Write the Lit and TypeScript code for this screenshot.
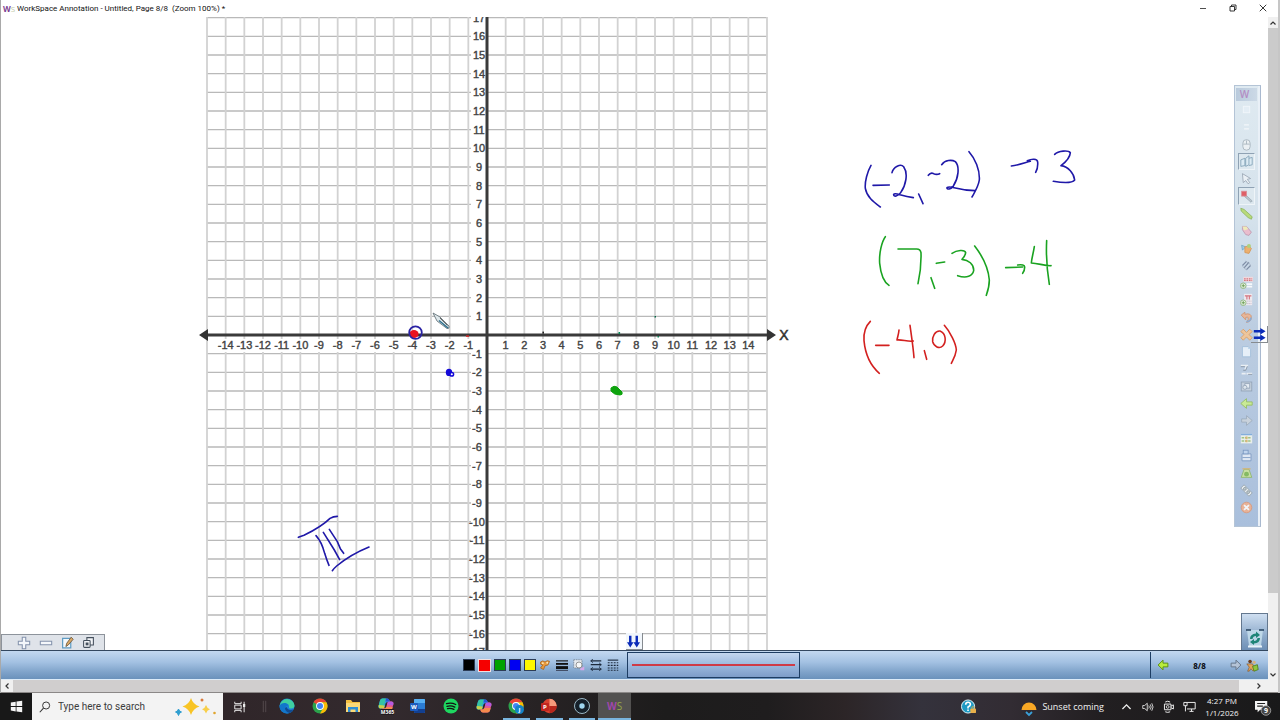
import { LitElement, html, svg, css, TemplateResult } from "lit";
import { customElement } from "lit/decorators.js";
import { classMap } from "lit/directives/class-map.js";

type Glyph = TemplateResult;

const icon = (body: Glyph, size = 16) =>
  html`<svg class="icon" width=${size} height=${size} viewBox="0 0 16 16" aria-hidden="true">${body}</svg>`;

/* ---------- coordinate plane ---------- */

const STEP = 56 / 3;
const range = (from: number, to: number) =>
  Array.from({ length: to - from + 1 }, (_, i) => from + i);

@customElement("coordinate-plane")
export class CoordinatePlane extends LitElement {
  static styles = css`
    :host { display: block; width: 100%; height: 100%; }
    .board { display: block; width: 100%; height: 100%; overflow: hidden; }
    .row { stroke: #b9b9b9; stroke-width: 1.3; }
    .col { stroke: #d2d2d2; stroke-width: 1.8; }
    .axis { stroke: #3a3a3a; stroke-width: 3; }
    .head { fill: #333; }
    .knock { fill: #fff; }
    .label {
      font: 400 11px "Liberation Sans", Arial, sans-serif;
      fill: #444;
      stroke: #444;
      stroke-width: 0.4;
      text-anchor: middle;
    }
    .name { font: 400 14px "Liberation Sans", Arial, sans-serif; fill: #333; stroke: #333; stroke-width: 0.5; text-anchor: middle; }
    .ink { fill: none; stroke-width: 4.8; stroke-linecap: round; stroke-linejoin: round; }
    .blue { stroke: #1f18a8; }
    .green { stroke: #1aa321; }
    .red { stroke: #d3201f; }
  `;

  private grid() {
    const left = -15 * STEP;
    return svg`
      ${range(-17, 17).map((n) => svg`<line class="row" x1=${left} x2=${-left} y1=${-n * STEP} y2=${-n * STEP}></line>`)}
      ${range(-15, 15).map((n) => svg`<line class="col" y1="-319" y2="317" x1=${n * STEP} x2=${n * STEP}></line>`)}
      ${range(-17, 17).filter((n) => n !== 0).map((n) => svg`
        <rect class="knock" x="-16" y=${-n * STEP - 6} width="16" height="12"></rect>
        <text class="label" x=${n > 0 ? -8 : -10} y=${-n * STEP + 4}>${n}</text>`)}
      ${range(-14, 14).filter((n) => n !== 0).map((n) => svg`
        <rect class="knock" x=${n * STEP - 8} y="4" width="16" height="13"></rect>
        <text class="label" x=${n * STEP} y="14">${n}</text>`)}
      <line class="axis" x1="0" x2="0" y1="-319" y2="317"></line>
      <line class="axis" x1="-282" x2="282" y1="0" y2="0"></line>
      <path class="head" d="M-288 0 L-279 -6 V6Z M289 0 L280 -6 V6Z"></path>
      <text class="name" x="297" y="5">X</text>`;
  }

  private ink() {
    return svg`
      <g class="ink" transform="translate(849 113) scale(.33333)" role="img" aria-label="Handwritten points and quadrants">
        <path class="blue" d="M63 106C52 125 44 155 46 175C50 200 70 215 91 231M69 166L118 165M126 128C130 110 152 100 161 110C175 130 168 165 152 188C145 199 130 202 131 193C135 186 150 197 190 203M206 192L219 221M235 136Q242 126 251 131Q260 135 269 131M275 104C285 90 305 88 316 95C330 110 325 145 310 168C303 178 290 180 291 173C300 164 315 180 375 182M357 65C375 85 390 120 388 150C385 170 375 185 366 201M484 108C505 106 525 98 541 94M532 92C545 86 562 85 563 96C564 108 562 118 557 127M614 73C625 62 655 60 661 68C660 85 645 98 633 107C655 110 672 130 674 150C665 162 635 158 610 154"></path>
        <path class="green" d="M106 320C95 335 87 370 89 400C92 430 100 455 117 466M144 357L200 357Q211 357 213 368C214 400 211 430 204 461M243 443L254 475M259 400L284 396M306 370C320 360 345 358 347 368C345 380 338 385 336 388C355 390 372 402 371 422C368 438 350 446 323 437M374 348C395 375 415 415 418 450C418 470 414 482 409 496M467 413L518 411M503 405C515 403 525 405 524 412Q524 422 518 430M553 350C550 370 545 385 544 399C565 400 585 408 603 407M590 332C588 370 591 420 598 463"></path>
        <path class="red" d="M61 574C50 585 40 605 42 632C46 675 65 710 88 730M77 646L117 646M147 600C146 612 143 620 141 630C155 628 175 636 190 633M180 586C184 615 190 655 192 683M223 662L230 688M270 603C255 602 246 620 248 635C252 650 268 658 278 648C290 635 288 610 270 603M283 586C300 605 318 640 319 660C316 680 310 688 304 700"></path>
      </g>
      <g class="ink" transform="translate(279 473) scale(.33333)">
        <path class="blue" d="M55 142L72 136C100 122 135 100 150 85Q160 79 172 79M157 242Q162 235 170 228C200 203 230 186 267 171M108 137C120 150 130 175 134 190Q140 210 147 226M130 127L163 180L179 209M148 118L172 155L181 176L191 190"></path>
      </g>`;
  }

  private marks() {
    return svg`
      <ellipse cx="-73" cy="-1" rx="4.6" ry="4" fill="#ea1220"></ellipse>
      <circle cx="-71.5" cy="-2.4" r="6.3" fill="none" stroke="#2a22a4" stroke-width="1.8"></circle>
      <ellipse cx="-38" cy="37.4" rx="3.2" ry="3.6" fill="#1308d8"></ellipse>
      <circle cx="-35.2" cy="39.2" r="1.8" fill="#fff" stroke="#1308d8" stroke-width="1.5"></circle>
      <path d="M124 53Q127 50 130 52L135 57Q136 60 133 60Q127 60 124 56Z" fill="#0ea30e" stroke="#0ea30e"></path>
      <rect x="-21" y=".4" width="3" height="1.4" fill="#d22"></rect>
      <rect x="55.400" y="-3.400" width="1.600" height="2" fill="#222"></rect>
      <rect x="131.500" y="-3" width="1.600" height="2" fill="#0a8a5a"></rect>
      <rect x="167.500" y="-19" width="1.500" height="1.500" fill="#064"></rect>
      <rect x="170.500" y="1" width="1.500" height="1.500" fill="#0a8a5a"></rect>
      <path d="M-54 -22L-47 -18L-38 -9Q-37 -6 -40 -6.500L-50 -14Z" fill="#dfe9ec" stroke="#68757c" stroke-width=".9"></path>
      <path d="M-48 -14.500L-39 -7" stroke="#2d6f8d" stroke-width="1.500" fill="none"></path>
      <path d="M-47 -17L-39.500 -9.500" stroke="#444" stroke-width=".8" fill="none"></path>`;
  }

  render() {
    return html`<svg class="board">
      <g transform="translate(486 318)">${this.grid()}${this.marks()}</g>
      ${this.ink()}
    </svg>`;
  }
}

/* ---------- floating tool palette ---------- */

const arrowL = svg`<path d="M1.500 8L8 1.500V5.500H14.500V10.500H8V14.500Z" fill="#b9ec3c" stroke="#5b8f10" stroke-width="1.300"></path>`;
const arrowR = svg`<path d="M14.500 8L8 1.500V5.500H1.500V10.500H8V14.500Z" fill="#b4c3d6" stroke="#66768a" stroke-width="1.300"></path>`;

const tools: { name: string; body: Glyph; pressed?: boolean }[] = [
  { name: "Dock", body: svg`<rect x="4" y="4" width="8" height="8" fill="#e6eff6" stroke="#f6fafd"></rect>` },
  { name: "Minimize", body: svg`<path d="M5 6H11M5 11H11" stroke="#f6fafd" stroke-width="1.500"></path>` },
  { name: "Mouse mode", body: svg`<rect x="3.500" y="2" width="9" height="13" rx="4.500" fill="#eef2f4" stroke="#9aa8b2"></rect><path d="M4 7.500H12M8 3V7.500" stroke="#9aa8b2" fill="none"></path>` },
  { name: "Annotate desktop", pressed: true, body: svg`<path d="M1 6L6 4V13L1 14ZM7 4L11 1V12L7 14ZM11 4L15 3V12L11 13" fill="#dcecf5" stroke="#6e93ab"></path>` },
  { name: "Select", body: svg`<path d="M3 2L13 8L9 9L12 13L10 14.500L7 10.500L4 13Z" fill="#eef3f7" stroke="#8b98a6"></path>` },
  { name: "Pen", pressed: true, body: svg`<path d="M7 6L15 13.500L13.500 15L5.500 8Z" fill="#b7c3ca" stroke="#8393a0" stroke-width=".8"></path><rect x="2" y="1.500" width="6" height="6" fill="#e0484f" stroke="#d97f86"></rect>` },
  { name: "Highlighter", body: svg`<path d="M1 1.500L5 3L15 12L14 15L10 13L1.500 5Z" fill="#b5d967" stroke="#7fae45"></path>` },
  { name: "Eraser", body: svg`<path d="M3 3L8 3L14 10L11 14L7 13L3 7Z" fill="#efb8c8" stroke="#b98aa4"></path><path d="M3 3L8 3L10 6L5 8Z" fill="#f3edb0"></path>` },
  { name: "Fill", body: svg`<path d="M2 4L7 6L3 10Z" fill="#9ccbe6" stroke="#5e9bc2"></path><path d="M6 6L11 5L14 8L11 14L6 13Z" fill="#f2a95c" stroke="#d68939"></path><circle cx="11" cy="5" r="2.500" fill="#a9cf6c"></circle>` },
  { name: "Lines", body: svg`<path d="M3 8L8 3M5 11L11 4M8 13L13 8" stroke="#71809a" stroke-width="1.500"></path><path d="M7 2.500L13 7M3 9L8 13.500" stroke="#9aa6ba"></path>` },
  { name: "Text", body: svg`<rect x="4" y="1" width="12" height="6" fill="#f7d9dc"></rect><path d="M5 3.500H15M5 5.500H15" stroke="#d9636c" stroke-width="1.400" stroke-dasharray="2 1"></path><path d="M8 10H15M8 13H15" stroke="#fff" stroke-width="2"></path><circle cx="4" cy="12" r="3.400" fill="#f1f7ea" stroke="#7fae5c"></circle><path d="M2 12H6M4 10V14" stroke="#5e983b" stroke-width="1.200"></path>` },
  { name: "Math text", body: svg`<rect x="5" y="1" width="10" height="14" fill="#f6eef2"></rect><path d="M6 3.500H14M8.500 4V8M11.500 4V8" stroke="#d9636c" stroke-width="1.400"></path><path d="M8 10H14M8 13H14" stroke="#b8a8b8" stroke-dasharray="1.500 1"></path><circle cx="4" cy="12" r="3.400" fill="#f1f7ea" stroke="#7fae5c"></circle><path d="M2 12H6M4 10V14" stroke="#5e983b" stroke-width="1.200"></path>` },
  { name: "Undo", body: svg`<path d="M1.500 5L6 1.500V4Q14 2 14 8Q14 13 8 14Q11 10 10 8Q9 7 7 8V11Z" fill="#f0b189" stroke="#d18a5e"></path><path d="M8 13Q13 13 13.500 8" stroke="#7fa7d6" stroke-width="2" fill="none"></path>` },
  { name: "Clear", body: svg`<path d="M4 1.500L8 5.500L12 1.500L15 4.500L11 8L15 12L12 15L8 11L4 15L1 12L5 8L1 4.500Z" fill="#f6c48f" stroke="#e0954a"></path>` },
  { name: "New page", body: svg`<path d="M3 2H10L13 5V14.500H3Z" fill="#eef6fd" stroke="#9dbcd9"></path><path d="M10 2V5H13" fill="#bcd7ee"></path>` },
  { name: "Ruler", body: svg`<path d="M1 3H10M8 4L6 8M2 13H7M8 13H15" stroke="#f3f6f8" stroke-width="2"></path><path d="M1 4.500H6M9 4L7 9H4M10 14H15" stroke="#7a8694" fill="none"></path>` },
  { name: "Capture", body: svg`<rect x="1.500" y="2.500" width="13" height="11" fill="#c8d2dd" stroke="#8a9aae"></rect><rect x="6" y="4.500" width="6" height="5.500" fill="#eef3f7" stroke="#8a9aae"></rect><circle cx="6" cy="9" r="2.500" fill="#e3e9ee" stroke="#8a9aae"></circle>` },
  { name: "Previous", body: svg`<path d="M1 8L8 2V6H15V10H8V14Z" fill="#cdf08a" stroke="#8dba4a"></path>` },
  { name: "Next", body: svg`<path d="M15 8L8 2V6H2V10H8V14Z" fill="#cdd5dc" stroke="#98a6b5"></path>` },
  { name: "Table", body: svg`<rect x="1" y="2" width="14" height="12" fill="#f3f6ee"></rect><path d="M1 3H15" stroke="#7ba9dc" stroke-width="2"></path><path d="M2 7H14M2 11H14" stroke="#9ec474" stroke-width="2" stroke-dasharray="3 1"></path><path d="M8 5.500V13" stroke="#e2b463" stroke-width="2.500" stroke-dasharray="3 1"></path>` },
  { name: "Save", body: svg`<path d="M2.500 6H13.500V14.500H2.500Z" fill="#e8eef7" stroke="#7090bd"></path><rect x="4" y="1.500" width="6" height="4.500" fill="#c3d7f0" stroke="#7090bd"></rect><path d="M3 10.500H13" stroke="#7090bd"></path>` },
  { name: "Gallery", body: svg`<path d="M1.500 14L5 4H11L14.500 14Z" fill="#cde59a" stroke="#86b257"></path><circle cx="8" cy="10" r="3" fill="#7fb94f"></circle><path d="M3 3.500H13" stroke="#e0b45f" stroke-width="1.500"></path>` },
  { name: "Link", body: svg`<path d="M1 5L5 1L15 11L11 15Z" fill="#f2f4f3" stroke="#909ca0"></path><circle cx="6" cy="6" r="1.700" fill="#cfd6d6" stroke="#7d898d"></circle><circle cx="10" cy="10" r="1.700" fill="#cfd6d6" stroke="#7d898d"></circle>` },
  { name: "Exit", body: svg`<circle cx="8" cy="8" r="6.500" fill="#f3b08c" stroke="#e0916a"></circle><path d="M5 5L11 11M11 5L5 11" stroke="#fff" stroke-width="2.200"></path>` },
];

@customElement("tool-palette")
export class ToolPalette extends LitElement {
  static styles = css`
    :host {
      box-sizing: border-box;
      display: flex;
      flex-direction: column;
      width: 27px;
      height: 442px;
      padding: 2px 3px 10px 1px;
      border: 1px solid #b4c4d6;
      border-right-color: #a9b9cf;
      background: linear-gradient(#dfeaf1, #d5e2ec 30%, #bccde1 55%, #a9bfdc);
      box-shadow: inset -2px 0 #e9f0f7;
    }
    .head {
      height: 13px;
      font: 600 10px/12px "Open Sans", sans-serif;
      color: #b48cc4;
      text-align: center;
      background: linear-gradient(90deg, #b9cadc, #ccd9e6);
      padding-right: 4px;
    }
    .tool {
      flex: 1;
      display: grid;
      place-items: center;
      align-self: center;
      box-sizing: border-box;
      width: 17px;
      min-height: 0;
      padding: 0;
      border: 1px solid transparent;
      background: none;
    }
    .pressed { border-color: #8fa2b4 #eef4f8 #eef4f8 #8fa2b4; background: #dde8ef; }
    .icon { display: block; opacity: 0.85; }
  `;

  render() {
    return html`<div class="head">W</div>
      ${tools.map((t) => html`<button class=${classMap({ tool: true, pressed: !!t.pressed })} aria-label=${t.name}>
        ${icon(t.body, 13)}</button>`)}`;
  }
}

/* ---------- pen and page toolbar ---------- */

const swatches = [
  { name: "Black", cls: "black" },
  { name: "Red", cls: "red" },
  { name: "Green", cls: "green" },
  { name: "Blue", cls: "blue" },
  { name: "Yellow", cls: "yellow" },
];

const penTools: { name: string; body: Glyph }[] = [
  { name: "More colors", body: svg`<path d="M2 4Q5 1 8 4Q11 1 14 3L12 8L8 9L6 14L2 12L5 8Q1 8 2 4Z" fill="#e99a3d" stroke="#a55f17"></path><circle cx="5" cy="5.500" r="1.300" fill="#fbe7b6"></circle><circle cx="11" cy="5" r="1.300" fill="#fbe7b6"></circle>` },
  { name: "Line width", body: svg`<path d="M0 2.500H16" stroke="#111" stroke-width="1.500"></path><path d="M0 6.500H16" stroke="#111" stroke-width="2.500"></path><path d="M0 11.500H16" stroke="#111" stroke-width="4"></path><path d="M0 15.500H16" stroke="#223" stroke-width="1"></path>` },
  { name: "Transparency", body: svg`<path d="M1 1H12V12H1Z" fill="#e6ebf0" stroke="#6f7d8c" stroke-dasharray="2 1"></path><circle cx="8" cy="8" r="4" fill="#f5f7f8" stroke="#777"></circle><path d="M9 13L15 10V15H10Z" fill="#d6a8ea"></path>` },
  { name: "Line ends", body: svg`<path d="M1 2.500H15M1 7.500H15M1 13.500H15" stroke="#1c2a3c" stroke-width="1.600"></path><path d="M4 0L1 2.500L4 5M12 5L15 7.500L12 10M4 11L1 13.500L4 16M12 11L15 13.500L12 16" stroke="#1c2a3c" fill="none"></path>` },
  { name: "Line style", body: svg`<path d="M1 1.500H15" stroke="#1c2a3c" stroke-width="1.500"></path><path d="M1 5H15M1 8.500H15M1 12H15M1 15H15" stroke="#1c2a3c" stroke-width="1.400" stroke-dasharray="2.500 1.500"></path>` },
];

@customElement("pen-bar")
export class PenBar extends LitElement {
  static styles = css`
    :host {
      box-sizing: border-box;
      display: flex;
      align-items: stretch;
      height: 30px;
      border-top: 1px solid #33475f;
      border-bottom: 1px solid #dcebf8;
      background: linear-gradient(#c3d8f0, #a3c1e2 40%, #7fa3ca 75%, #6a91bb);
    }
    button { padding: 0; border: 0; background: none; display: grid; place-items: center; }
    .before { flex: 460; }
    .after { flex: 348; }
    .swatches { display: flex; align-items: center; gap: 3px; margin-right: 2px; }
    .swatch { width: 12px; height: 12px; border: 1px solid #2c3c56; }
    .black { background: #000; }
    .red { width: 13px; height: 13px; background: #f60000; border: 1px solid #f3dfe0; }
    .green { background: #00a200; }
    .blue { background: #0000f2; }
    .yellow { background: #fff800; }
    .tools { display: flex; align-items: center; gap: 4px; padding-right: 8px; }
    .tool { width: 13px; }
    .icon { display: block; }
    .preview {
      width: 173px;
      box-sizing: border-box;
      margin: 1px 0;
      border: 1px solid #1d3d63;
      display: flex;
      align-items: center;
      padding: 0 4px;
      background: linear-gradient(#c3d6ef, #9ebce0 45%, #7d9dc9);
    }
    .stroke { flex: 1; height: 2px; background: #cf3b47; }
    .pages {
      width: 118px;
      box-sizing: border-box;
      margin: 1px 0;
      border-left: 1px solid #1d3d63;
      display: flex;
      align-items: center;
      padding: 0 9px 0 6px;
    }
    .count { flex: 1; text-align: center; font: 700 8px "Open Sans", sans-serif; color: #05070c; }
    .person { margin-left: 4px; }
  `;

  render() {
    return html`
      <span class="before"></span>
      <div class="swatches">
        ${swatches.map((s) => html`<button class="swatch ${s.cls}" aria-label=${s.name}></button>`)}
      </div>
      <div class="tools">
        ${penTools.map((t) => html`<button class="tool" aria-label=${t.name}>${icon(t.body, 12)}</button>`)}
      </div>
      <div class="preview"><span class="stroke"></span></div>
      <span class="after"></span>
      <div class="pages">
        <button aria-label="Previous page">${icon(arrowL, 12)}</button>
        <span class="count">8/8</span>
        <button aria-label="Next page">${icon(arrowR, 12)}</button>
        <button class="person" aria-label="Users">${icon(svg`
          <circle cx="5" cy="3" r="2.200" fill="#6b3d1e"></circle><circle cx="10" cy="4" r="2" fill="#d8b27a"></circle>
          <path d="M1 6H8L11 12L9 15L6 12L4 15H2L4 10Z" fill="#e2a35b" stroke="#784d20" stroke-width=".7"></path>
          <path d="M8 9L14 7L15 13L10 15Z" fill="#8fc63f" stroke="#4d7d15"></path>`, 13)}</button>
      </div>`;
  }
}

/* ---------- desktop taskbar ---------- */

const chrome = svg`
  <circle cx="8" cy="8" r="7.500" fill="#2ba24c"></circle>
  <path d="M8 8L1.500 4.250A7.500 7.500 0 0 1 14.500 4.250H8Z" fill="#ea4335"></path>
  <path d="M8 4.250H14.500A7.500 7.500 0 0 1 8 15.500L11.300 9.900Z" fill="#fbbc05"></path>
  <circle cx="8" cy="8" r="3.900" fill="#fff"></circle><circle cx="8" cy="8" r="3" fill="#4285f4"></circle>`;

const copilot = svg`
  <path d="M4.500 1.500H9Q11 1.500 11.500 3.500L12 5H9.500Q8 5 7.500 6.500L6 11.500H2.800Q0 11.500 .7 8.500L2 3.500Q2.600 1.500 4.500 1.500Z" fill="#2c9be8"></path>
  <path d="M1.400 6L2 3.500Q2.600 1.500 4.500 1.500H8L6.500 7L2.500 11.500Q0 11.500 .7 8.500Z" fill="#35c3a4"></path>
  <path d="M.8 8L6.800 8.500L6 11.500H2.800Q.2 11.500 .8 8Z" fill="#c9d14a"></path>
  <path d="M11.500 14.500H7Q5 14.500 4.500 12.500L4.200 11.500H6Q7.700 11.500 8.200 10L10 4.500H13.200Q16 4.500 15.300 7.500L14 12.500Q13.400 14.500 11.500 14.500Z" fill="#e4598f"></path>
  <path d="M4.200 11.500H6Q7.700 11.500 8.200 10L14.600 10L14 12.500Q13.400 14.500 11.500 14.500H7Q5 14.500 4.200 11.500Z" fill="#f58a4c"></path>
  <path d="M10 4.500H13.200Q16 4.500 15.300 7.500L15 8.500L9 7.500Z" fill="#b45be0"></path>
  <path d="M8 1.500H9Q11 1.500 11.500 3.500L11.800 4.500H7.500Z" fill="#2a55d4"></path>`;

const apps: { name: string; body: Glyph; open?: boolean }[] = [
  { name: "Microsoft Edge", body: svg`<circle cx="8" cy="8" r="7.500" fill="#1d7fd6"></circle><path d="M.6 8A7.500 7.500 0 0 1 15.500 7.500Q15.500 10.500 12 10.500Q9.500 10.500 10 8.500Q10 5.500 6.500 5.500Q2.500 5.500 .6 8Z" fill="#3fd0a1"></path><path d="M.5 8Q2 4.500 6.500 5Q9 5.500 9 7.500Q6 7.500 6 11Q6.500 14.500 10.500 15A7.500 7.500 0 0 1 .5 8Z" fill="#1277cb"></path><path d="M6 10Q6 14 10.500 15Q13.500 14 14.500 11.500Q9 13 7.500 9Z" fill="#104c93"></path>` },
  { name: "Google Chrome", body: chrome },
  { name: "File Explorer", body: svg`<path d="M1 2H6L7.500 4H15V14H1Z" fill="#f4bf41"></path><path d="M1 5H15V14H1Z" fill="#fbd977"></path><path d="M3 9H13V14H10.500V11.500H5.500V14H3Z" fill="#2f8fd4"></path>` },
  { name: "Microsoft 365 Copilot", body: svg`<g transform="translate(0 -1)">${copilot}</g><rect x="3" y="11" width="13" height="6" fill="#231c20"></rect><text class="tiny" x="9.500" y="16">M365</text>` },
  { name: "Word", body: svg`<rect x="4" y="1" width="11" height="14" rx="1" fill="#2b7cd3"></rect><path d="M4 2Q4 1 5 1H14Q15 1 15 2V5H4Z" fill="#58b0f2"></path><path d="M4 11H15V14Q15 15 14 15H5Q4 15 4 14Z" fill="#123f90"></path><rect x="0" y="5" width="8" height="8" rx="1" fill="#1b5bbe"></rect><text class="badge" x="4" y="11.300">W</text>` },
  { name: "Spotify", body: svg`<circle cx="8" cy="8" r="7.500" fill="#1ed760"></circle><path d="M3.500 5.700Q8.500 4.300 12.700 6.500M4 8.300Q8.200 7.200 11.800 9.100M4.500 10.700Q8 9.900 10.900 11.400" fill="none" stroke="#111" stroke-width="1.300" stroke-linecap="round"></path>` },
  { name: "Copilot", body: copilot },
  { name: "Chrome profile J", open: true, body: svg`${chrome}<circle cx="11.500" cy="11.500" r="4.500" fill="#1384c7"></circle><text class="badge" x="11.500" y="14">J</text>` },
  { name: "PowerPoint", open: true, body: svg`<circle cx="8.500" cy="8" r="7.200" fill="#d8412f"></circle><path d="M8.500 .8A7.200 7.200 0 0 1 15.700 8H8.500Z" fill="#f59a7b"></path><path d="M8.500 8H15.700A7.200 7.200 0 0 1 8.500 15.200Z" fill="#b7271c"></path><rect x="0" y="5" width="8" height="8" rx="1" fill="#c2261f"></rect><text class="badge" x="4" y="11.300">P</text>` },
  { name: "Recorder", open: true, body: svg`<circle cx="8" cy="8" r="7.500" fill="#15202a" stroke="#9bb8c6" stroke-width="1"></circle><circle cx="8" cy="8" r="2.700" fill="#9fd6f0"></circle>` },
];

@customElement("task-bar")
export class TaskBar extends LitElement {
  static styles = css`
    :host {
      display: flex;
      align-items: stretch;
      height: 27px;
      color: #f2f2f2;
      font: 9px "Open Sans", "Noto Sans", sans-serif;
      background: linear-gradient(90deg, #2b2023, #332a2e 30%, #1d1c1c 52%, #1f1d1e 60%, #2c2527 66%, #34323c 72%, #322c33 79%, #221f21 86%, #19191a);
    }
    button { padding: 0; border: 0; background: none; color: inherit; font: inherit; display: grid; place-items: center; }
    .icon { display: block; overflow: visible; }
    .start { width: 32px; background: #181818; }
    .search { width: 191px; display: flex; align-items: center; background: #f3f3f3; padding: 0 6px 0 7px; box-sizing: border-box; }
    .field {
      flex: 1;
      min-width: 0;
      margin-left: 7px;
      padding: 0;
      border: 0;
      outline: 0;
      background: none;
      font: 10px Roboto, "Noto Sans", sans-serif;
      color: #3c3c3c;
    }
    .field::placeholder { color: #3c3c3c; opacity: 1; }
    .view { width: 34px; }
    .rule { width: 14px; display: grid; place-items: center; }
    .apps { display: grid; grid-template-columns: repeat(11, 1fr); width: 360px; }
    .app { border-bottom: 2px solid transparent; }
    .open { border-color: #7ab5df; margin: 0 3px; }
    .active { margin: 0; background: #525150; }
    .ws { font: 700 10px "Open Sans", sans-serif; color: #a047ac; }
    .ws .s { font-weight: 400; color: #95a547; }
    .gap { flex: 1; }
    .help { width: 30px; margin-right: 38px; }
    .weather { display: flex; align-items: center; gap: 5px; margin-right: 12px; }
    .tray { display: flex; }
    .tray button { width: 21px; }
    .clock { width: 44px; text-align: center; font-size: 8px; line-height: 12px; align-content: center; }
    .notes { width: 36px; }
    .badge { font: 700 6px "Open Sans", sans-serif; fill: #fff; text-anchor: middle; }
    .tiny { font: 700 5px "Open Sans", sans-serif; fill: #fff; text-anchor: middle; }
    .nine { font: 700 8px "Open Sans", sans-serif; fill: #fff; text-anchor: middle; }
  `;

  render() {
    return html`
      <button class="start" aria-label="Start">${icon(svg`<path d="M1 3L7 2V7.500H1ZM8 1.900L15 1V7.500H8ZM1 8.500H7V14L1 13ZM8 8.500H15V15L8 14.100Z" fill="#f4f4f4"></path>`, 13)}</button>
      <div class="search">
        ${icon(svg`<circle cx="9.500" cy="6" r="4.700" fill="none" stroke="#333" stroke-width="1.300"></circle><path d="M6 9.500L1 15" stroke="#333" stroke-width="1.400"></path>`, 12)}
        <input class="field" type="text" aria-label="Search" placeholder="Type here to search" />
        <svg class="icon" width="42" height="20" viewBox="0 0 42 20" aria-hidden="true">
          <path d="M16 1Q18 7.500 24.500 9.500Q18 11.500 16 18Q14 11.500 7.500 9.500Q14 7.500 16 1Z" fill="#f8c425"></path>
          <path d="M31 8Q32 11.300 35 12.200Q32 13.200 31 16.500Q30 13.200 27 12.200Q30 11.300 31 8Z" fill="#f8cf4a"></path>
          <path d="M3.500 12Q4.200 14.500 6.500 15Q4.200 15.500 3.500 18.500Q2.800 15.500 .5 15Q2.800 14.500 3.500 12Z" fill="#2f9ed0" stroke="#2f9ed0"></path>
          <circle cx="27" cy="3" r="1.500" fill="#d97a3a"></circle><circle cx="39.500" cy="16" r="1.300" fill="#e0a52e"></circle>
        </svg>
      </div>
      <button class="view" aria-label="Task view">${icon(svg`<path d="M1 1V3.500H9.500V1M1 15V12.500H9.500V15M1 5.500H9.500V10.500H1ZM13.500 1V15" fill="none" stroke="#e9e9e9" stroke-width="1.300"></path><rect x="12" y="4" width="3" height="4" fill="#e9e9e9"></rect>`, 12)}</button>
      <span class="rule">${icon(svg`<path d="M6.500 1V15M9.500 1V15" stroke="#5b5154"></path>`, 13)}</span>
      <div class="apps">
        ${apps.map((a) => html`<button class=${classMap({ app: true, open: !!a.open })} aria-label=${a.name}>${icon(a.body, 16)}</button>`)}
        <button class="app open active" aria-label="WorkSpace"><span class="ws">W<span class="s">S</span></span></button>
      </div>
      <span class="gap"></span>
      <button class="help" aria-label="Get help">${icon(svg`<circle cx="7.500" cy="8" r="7" fill="#1f9ac4" stroke="#e5f5fa"></circle><path d="M5 6Q5 3.500 7.500 3.500Q10 3.500 10 5.800Q10 7.200 7.500 8.500V10M7.500 11.200V12.800" fill="none" stroke="#fff" stroke-width="1.700"></path><rect x="10" y="10" width="6" height="5" rx="1" fill="#e8b04a"></rect><path d="M11.500 10V9Q13 7 14.500 9V10" fill="none" stroke="#e8b04a"></path>`, 15)}</button>
      <div class="weather">${icon(svg`<path d="M.5 11A7.500 7.500 0 1 1 15.500 11Z" fill="#f9a825"></path><path d="M5 13L8 16L11 13" fill="none" stroke="#3aa0d8" stroke-width="1.800"></path>`, 16)}<span>Sunset coming</span></div>
      <div class="tray">
        <button aria-label="Show hidden icons">${icon(svg`<path d="M3 11L8 6L13 11" fill="none" stroke="#eee" stroke-width="1.600"></path>`, 13)}</button>
        <button aria-label="Volume">${icon(svg`<path d="M1 6H3.500L7 3V13L3.500 10H1ZM9 6Q10.500 8 9 10M11 4.500Q13.500 8 11 11.500M13 3Q16.500 8 13 13" fill="none" stroke="#eee" stroke-width="1.100"></path>`, 12)}</button>
        <button aria-label="Camera">${icon(svg`<path d="M3 5H11V12H3ZM11 7.500L14 6V11L11 9.500M4 2.500Q7 .5 10 2.500M4 14.500Q7 16 10 14.500" fill="none" stroke="#eee" stroke-width="1.200"></path><circle cx="7" cy="8.500" r="1.700" fill="none" stroke="#eee"></circle>`, 13)}</button>
        <button aria-label="Network">${icon(svg`<path d="M5 3H15V11H5M8 14H13M10.500 11V14M1 3H5V7H1ZM3 7V14" fill="none" stroke="#eee" stroke-width="1.200"></path>`, 13)}</button>
      </div>
      <div class="clock">4:27 PM<br />1/1/2026</div>
      <button class="notes" aria-label="Notifications, 9 new">${icon(svg`<path d="M0 1H14V11H6L3 14V11H0Z" fill="#f4f4f4"></path><path d="M2.500 4H11.500M2.500 7H9" stroke="#222" stroke-width="1.200"></path><circle cx="12.500" cy="12" r="5.500" fill="#454545" stroke="#bbb" stroke-width=".8"></circle><text class="nine" x="12.500" y="15">9</text>`, 14)}</button>`;
  }
}

/* ---------- window ---------- */

@customElement("app-root")
export class AppRoot extends LitElement {
  static styles = css`
    :host {
      display: flex;
      flex-direction: column;
      height: 100vh;
      overflow: hidden;
      background: #fff;
      font: 8px "Open Sans", "Noto Sans", sans-serif;
      color: #111;
    }
    button { padding: 0; border: 0; background: none; display: grid; place-items: center; color: inherit; }
    .icon { display: block; }
    .window {
      flex: 1;
      min-height: 0;
      display: flex;
      flex-direction: column;
      border-left: 1px solid #a9a9a9;
      border-right: 2px solid #c6c6c6;
    }
    .title { box-sizing: border-box; display: flex; align-items: center; height: 17px; padding: 0 0 1px 2px; }
    .logo { font-weight: 700; font-size: 8px; color: #7c3f93; width: 14px; }
    .logo .s { font-weight: 400; color: #c2c9a8; }
    .caption { flex: 1; white-space: pre; font-family: Roboto, "Noto Sans", sans-serif; }
    .title button { width: 30px; height: 16px; }
    .body { flex: 1; min-height: 0; display: flex; }
    .work { flex: 1; min-width: 0; display: flex; flex-direction: column; }
    .canvas { flex: 1; min-height: 0; position: relative; overflow: hidden; }
    .palette { position: absolute; top: 68px; right: 7px; }
    .mini {
      position: absolute;
      left: 0;
      bottom: 0;
      display: flex;
      align-items: center;
      gap: 8px;
      box-sizing: border-box;
      height: 16px;
      padding: 0 9px 0 15px;
      border: 1px solid #8d939b;
      border-bottom: 0;
      background: #dfe3e9;
    }
    .tab {
      position: absolute;
      width: 17px;
      height: 17px;
      background: #f1f6fb;
      border-right: 1px solid #868b90;
      border-bottom: 1px solid #868b90;
      box-sizing: border-box;
    }
    .down { left: 49.3%; bottom: 0; }
    .side { top: 309px; right: 0; background: none; }
    .bin {
      position: absolute;
      right: 0;
      bottom: 0;
      width: 27px;
      height: 37px;
      box-sizing: border-box;
      border: 1px solid #64788f;
      border-bottom: 0;
      align-items: end;
      background: linear-gradient(#cfdff1, #8eabcb 60%, #6d8fb5);
    }
    .vscroll { width: 10px; display: flex; flex-direction: column; background: #f0f0f0; }
    .vscroll button { height: 11px; }
    .vthumb { flex: 566; background: #cbcbcb; }
    .vrest { flex: 76; }
    .hscroll { display: flex; height: 12px; background: #f0f0f0; border-bottom: 1px solid #8b8887; }
    .hscroll button { width: 12px; }
    .hthumb { flex: 1229; background: #d0cece; }
    .hrest { flex: 15; }
    .hscroll .end { width: 10px; margin-right: 2px; }
  `;

  render() {
    const chevron = (d: string) => icon(svg`<path d=${d} fill="none" stroke="#333" stroke-width="2.400"></path>`, 8);
    const pair = svg`<path d="M2.500 1H5.500V9H8L4 15.500L0 9H2.500ZM10.500 1H13.500V9H16L12 15.500L8 9H10.500Z" fill="#0b2bb8"></path>`;
    return html`
      <div class="window">
        <header class="title">
          <span class="logo">W<span class="s">S</span></span>
          <span class="caption">WorkSpace Annotation - Untitled, Page 8/8  (Zoom 100%) *</span>
          <button aria-label="Minimize">${icon(svg`<path d="M2 9H14" stroke="#222" stroke-width="1.600"></path>`, 8)}</button>
          <button aria-label="Restore">${icon(svg`<path d="M2 5H11V14H2ZM5 5V2H14V11H11" fill="none" stroke="#222" stroke-width="1.800"></path>`, 8)}</button>
          <button aria-label="Close">${icon(svg`<path d="M1.500 1.500L14.500 14.500M14.500 1.500L1.500 14.500" stroke="#222" stroke-width="1.800"></path>`, 8)}</button>
        </header>
        <div class="body">
          <main class="work">
            <div class="canvas">
              <coordinate-plane></coordinate-plane>
              <tool-palette class="palette"></tool-palette>
              <button class="tab side" aria-label="Hide palette">${icon(svg`<g transform="rotate(-90 8 8)">${pair}</g>`, 13)}</button>
              <div class="mini">
                <button aria-label="Zoom in">${icon(svg`<path d="M6 1.500H10V6H14.500V10H10V14.500H6V10H1.500V6H6Z" fill="#f4f7fb" stroke="#8593ad" stroke-width="1.200"></path>`, 14)}</button>
                <button aria-label="Zoom out">${icon(svg`<path d="M1.500 6H14.500V10H1.500Z" fill="#f4f7fb" stroke="#8593ad" stroke-width="1.200"></path>`, 14)}</button>
                <button aria-label="Edit page">${icon(svg`<path d="M2 3H12V14.500H2Z" fill="#f3f8fc" stroke="#5f9cc4" stroke-width="1.500"></path><path d="M12.500 1.500L15 4L9 11L6 13L7 9Z" fill="#d9a765" stroke="#665238"></path>`, 13)}</button>
                <button aria-label="Duplicate page">${icon(svg`<path d="M6 2H14V11H6Z" fill="#f2f4f7" stroke="#444f5c" stroke-width="1.300"></path><rect x="2" y="5.500" width="8" height="8.500" rx="1" fill="#f2f4f7" stroke="#444f5c" stroke-width="1.300"></rect><rect x="4.500" y="8" width="3.500" height="3.500" fill="#444f5c"></rect>`, 13)}</button>
              </div>
              <button class="tab down" aria-label="Hide toolbar">${icon(pair, 13)}</button>
              <button class="bin" aria-label="Recycle bin">
                <svg class="icon" width="18" height="22" viewBox="0 0 18 22" aria-hidden="true">
                  <path d="M1 2H17L15 18H3Z" fill="#c9e2ef" opacity=".8"></path>
                  <path d="M0 2H5M13 2H18" stroke="#25425e" stroke-width="1.500"></path>
                  <path d="M2 18.500H16" stroke="#e9f3f9" stroke-width="2"></path>
                  <path d="M4 11Q4 6 10 5.500V3.500L14 7L10 10V8Q7 8 6.500 11ZM14 10Q14 15 8 15.500V17L4 14L8 11V13Q11 13 11.500 10Z" fill="#1f8577"></path>
                </svg>
              </button>
            </div>
            <pen-bar></pen-bar>
          </main>
          <div class="vscroll">
            <button aria-label="Scroll up">${chevron("M3 11L8 6L13 11")}</button>
            <span class="vthumb"></span><span class="vrest"></span>
            <button aria-label="Scroll down">${chevron("M3 5L8 10L13 5")}</button>
          </div>
        </div>
        <div class="hscroll">
          <button aria-label="Scroll left">${chevron("M11 3L6 8L11 13")}</button>
          <span class="hthumb"></span><span class="hrest"></span>
          <button class="end" aria-label="Scroll right">${chevron("M5 3L10 8L5 13")}</button>
          <span class="end"></span>
        </div>
      </div>
      <task-bar></task-bar>`;
  }
}
